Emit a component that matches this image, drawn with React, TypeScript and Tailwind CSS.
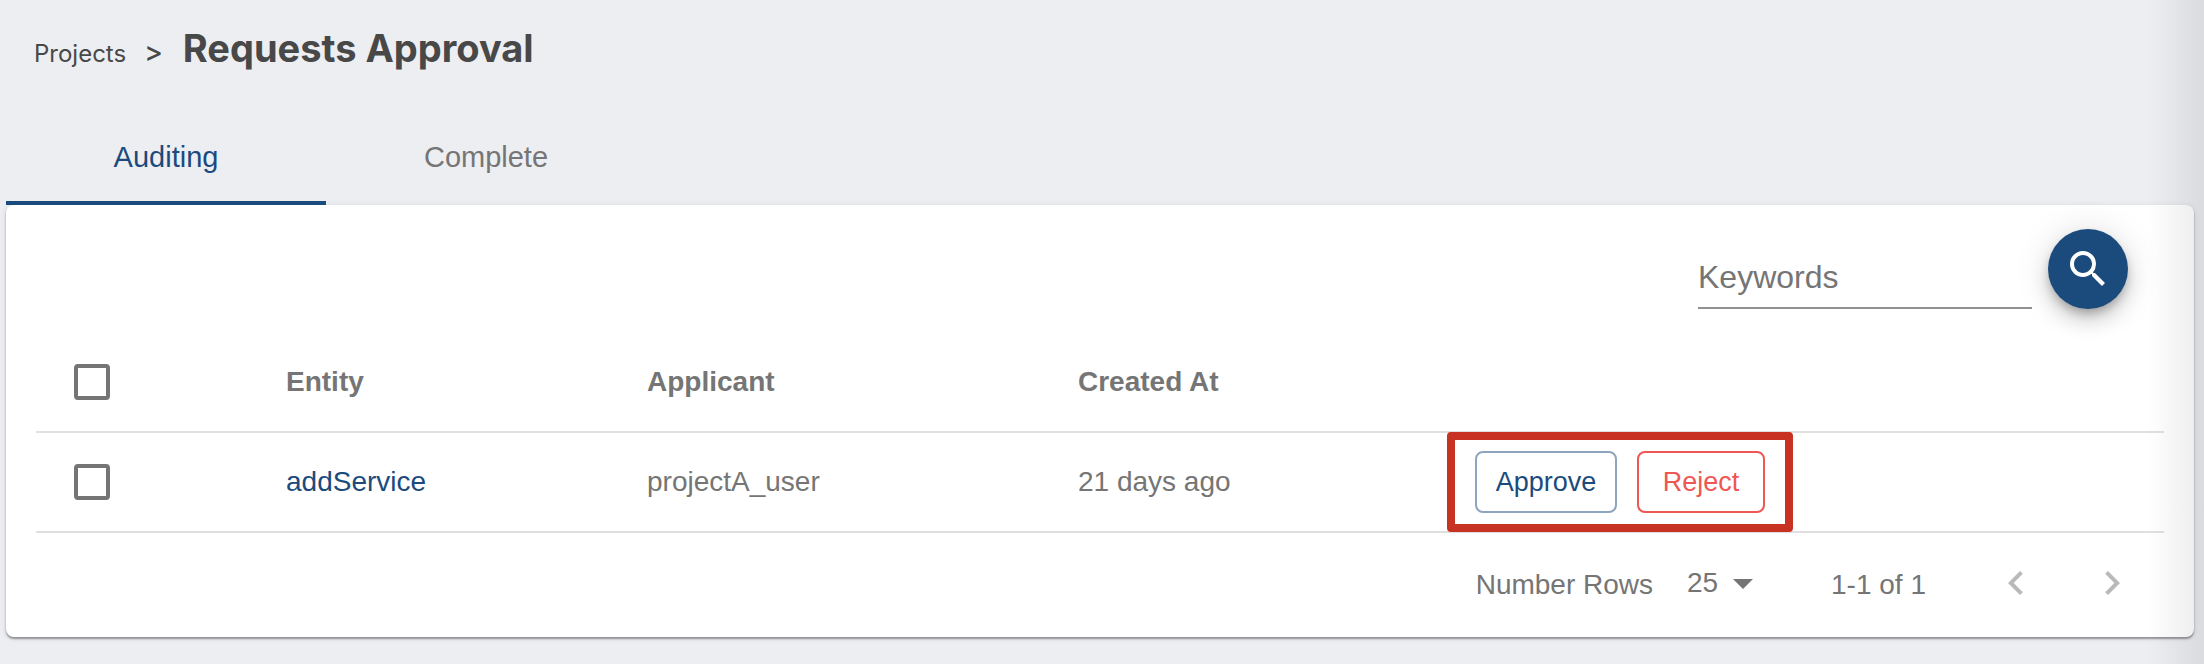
import { MdArrowDropDown, MdChevronLeft, MdChevronRight, MdSearch } from "react-icons/md";

const checkbox =
  "block size-9 appearance-none rounded-[4px] border-4 border-[#757575] bg-white checked:bg-[#1b4b7d]";

export default function App() {
  return (
    <div className="relative min-h-screen bg-[#edeef2] pb-[27px] pl-[6px] pr-[10px] font-['Liberation_Sans',Arial,sans-serif] text-[28px] leading-8 text-[#757575]">
      <nav aria-label="Breadcrumb" className="flex h-[125px] items-baseline pl-7 pt-6 font-['Inter',sans-serif] text-2xl text-[#484848]">
        <a href="#projects">Projects</a>
        <span className="pl-[18px] pr-5 text-[28px] font-medium">&gt;</span>
        <h1 className="text-[38px] leading-[48px] font-bold">Requests Approval</h1>
      </nav>
      <div role="tablist" className="flex h-20 text-[29px]">
        <button role="tab" aria-selected="true" className="w-80 border-b-4 border-[#1b4b7d] pb-3 text-[#1b4b7d]">Auditing</button>
        <button role="tab" aria-selected="false" className="w-80 border-b-4 border-transparent pb-3">Complete</button>
      </div>
      <main className="rounded-lg bg-white px-[30px] pb-4 shadow-[0_2px_2px_rgba(0,0,0,0.35),0_1px_6px_rgba(0,0,0,0.1)]">
        <form className="flex justify-end gap-4 pr-9 pt-6" onSubmit={(e) => e.preventDefault()}>
          <input aria-label="Keywords" placeholder="Keywords" className="h-20 w-[334px] border-b-2 border-[#919191] pt-[18px] text-[32px] outline-none placeholder:text-[#757575]" />
          <button aria-label="Search" className="flex size-20 items-center justify-center rounded-full bg-[#1b4b7d] text-white shadow-[0_6px_10px_-2px_rgba(0,0,0,0.25),0_12px_20px_rgba(0,0,0,0.14),0_2px_36px_rgba(0,0,0,0.12)]">
            <MdSearch className="size-12" />
          </button>
        </form>
        <table className="mt-[23px] w-full table-fixed border-collapse text-left">
          <colgroup>
            <col className="w-[250px]" />
            <col className="w-[361px]" />
            <col className="w-[431px]" />
            <col className="w-[397px]" />
            <col />
          </colgroup>
          <thead>
            <tr className="h-[100px] border-b-2 border-[#e0e0e0]">
              <th className="pl-[38px]"><input type="checkbox" aria-label="Select all" className={checkbox} /></th>
              <th>Entity</th>
              <th>Applicant</th>
              <th>Created At</th>
              <th aria-label="Actions" />
            </tr>
          </thead>
          <tbody>
            <tr className="h-[100px] border-b-2 border-[#e0e0e0]">
              <td className="pl-[38px]"><input type="checkbox" aria-label="Select addService" className={checkbox} /></td>
              <td><a href="#addService" className="text-[#1b4b7d]">addService</a></td>
              <td>projectA_user</td>
              <td>21 days ago</td>
              <td>
                <div className="relative flex w-fit gap-5 text-[27px]">
                  <button className="h-[62px] w-[142px] rounded-lg border-2 border-[#8da5be] text-[#1b4b7d]">Approve</button>
                  <button className="h-[62px] w-32 rounded-lg border-2 border-[#ee5753] text-[#ee5753]">Reject</button>
                  <div className="pointer-events-none absolute -inset-x-7 -inset-y-[19px] rounded-[4px] border-8 border-[#c83222]" />
                </div>
              </td>
            </tr>
          </tbody>
        </table>
        <div className="flex h-[88px] items-center justify-end pr-7 pt-3">
          <label htmlFor="rows" className="pt-1">Number Rows</label>
          <div className="relative ml-[34px] mr-16 flex items-center">
            <select id="rows" defaultValue="25" className="w-20 appearance-none bg-transparent">
              <option>10</option>
              <option>25</option>
              <option>50</option>
            </select>
            <MdArrowDropDown className="pointer-events-none absolute right-0 size-12" />
          </div>
          <span className="pt-1">1-1 of 1</span>
          <button aria-label="Previous page" className="ml-[66px] flex size-12 items-center justify-center text-[#b9b9b9]"><MdChevronLeft className="size-12" /></button>
          <button aria-label="Next page" className="ml-12 flex size-12 items-center justify-center text-[#b9b9b9]"><MdChevronRight className="size-12" /></button>
        </div>
      </main>
      <div className="pointer-events-none absolute inset-y-0 right-0 w-14 bg-linear-to-r from-transparent to-black/8" />
    </div>
  );
}
